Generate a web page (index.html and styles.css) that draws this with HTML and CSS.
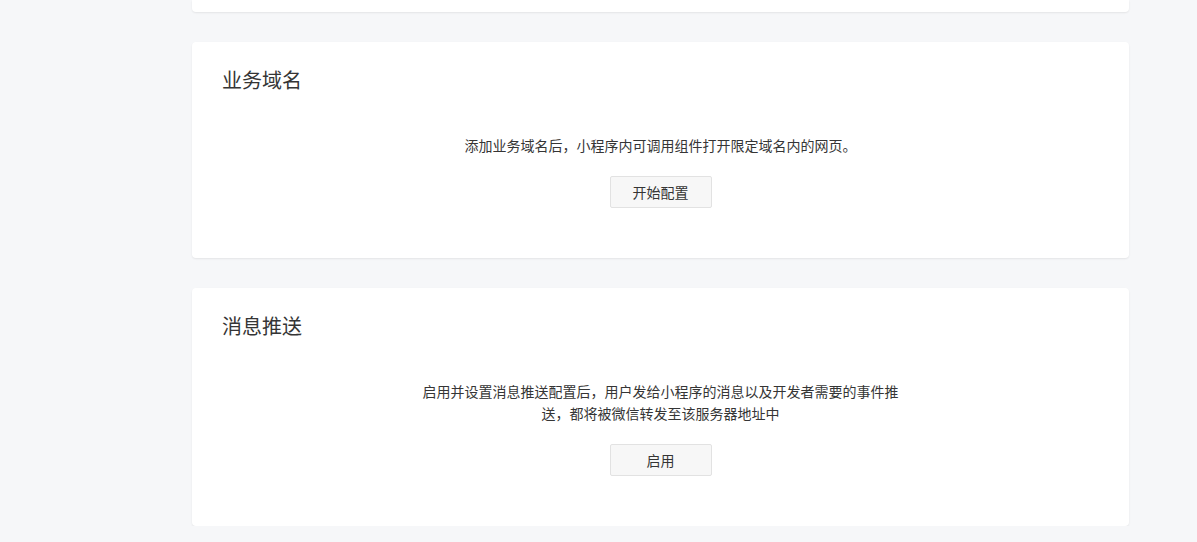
FILE: index.html
```html
<!DOCTYPE html>
<html lang="zh-CN">
<head>
<meta charset="utf-8">
<title>设置</title>
<link rel="stylesheet" href="styles.css">
</head>
<body>
<div class="main">
  <div class="card card-top"></div>
  <section class="card">
    <h2 class="card-title">业务域名</h2>
    <div class="card-body">
      <p class="desc">添加业务域名后，小程序内可调用组件打开限定域名内的网页。</p>
      <button class="btn">开始配置</button>
    </div>
  </section>
  <section class="card">
    <h2 class="card-title">消息推送</h2>
    <div class="card-body">
      <p class="desc">启用并设置消息推送配置后，用户发给小程序的消息以及开发者需要的事件推送，都将被微信转发至该服务器地址中</p>
      <button class="btn">启用</button>
    </div>
  </section>
</div>
</body>
</html>
```
FILE: styles.css
```css
html, body {
  margin: 0;
  padding: 0;
  background: #f6f7f9;
  font-family: "Noto Sans CJK SC", "Noto Sans", sans-serif;
  color: #353535;
}
.main {
  width: 937px;
  margin-left: 192px;
  display: flex;
  flex-direction: column;
  gap: 30px;
}
.card {
  background: #fff;
  border-radius: 4px;
  box-shadow: 0 1px 2px rgba(0, 0, 0, 0.08);
  padding: 24px 30px 50px;
}
.card-top {
  height: 12px;
  padding: 0;
  border-radius: 0 0 4px 4px;
}
.card-title {
  margin: 0;
  font-size: 20px;
  font-weight: 400;
  line-height: 28px;
  color: #353535;
}
.card-body {
  display: flex;
  flex-direction: column;
  align-items: center;
  padding-top: 40px;
}
.desc {
  margin: 0;
  max-width: 480px;
  font-size: 14px;
  line-height: 22px;
  text-align: center;
  color: #353535;
}
.btn {
  margin-top: 20px;
  width: 102px;
  height: 32px;
  font-family: inherit;
  font-size: 14px;
  color: #353535;
  background: #f7f7f7;
  border: 1px solid #e2e2e2;
  border-radius: 2px;
  padding: 0;
}
```
